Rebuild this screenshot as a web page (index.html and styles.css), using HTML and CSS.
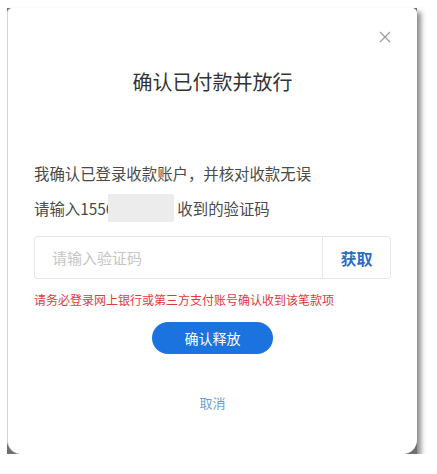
FILE: index.html
```html
<!DOCTYPE html>
<html lang="zh-CN">
<head>
<meta charset="utf-8">
<title>确认已付款并放行</title>
<link rel="stylesheet" href="styles.css">
</head>
<body>
<div class="stage">
  <div class="frame">
    <div class="modal">
      <button class="close" aria-label="关闭">
        <svg width="12" height="12" viewBox="0 0 12 12"><path d="M1 1L11 11M11 1L1 11" stroke="#9a9a9a" stroke-width="1.2" fill="none"/></svg>
      </button>
      <h1 class="title">确认已付款并放行</h1>
      <p class="line1">我确认已登录收款账户，并核对收款无误</p>
      <p class="line2">请输入1556<span class="mask"></span>收到的验证码</p>
      <div class="field">
        <div class="placeholder">请输入验证码</div>
        <div class="fetch">获取</div>
      </div>
      <p class="warn">请务必登录网上银行或第三方支付账号确认收到该笔款项</p>
      <div class="actions">
        <button class="primary">确认释放</button>
        <button class="cancel">取消</button>
      </div>
    </div>
  </div>
</div>
</body>
</html>
```

FILE: styles.css
```css
html, body {
  margin: 0;
  padding: 0;
  background: #ffffff;
}
body {
  font-family: "Noto Sans CJK SC", "Noto Sans", "Liberation Sans", sans-serif;
}
.stage {
  padding: 8px 0 0 7px;
}
.frame {
  width: 410px;
  height: 446px;
  background: #6e6e6e;
  box-shadow: 4px 4px 5px rgba(0, 0, 0, 0.45);
}
.modal {
  position: relative;
  box-sizing: border-box;
  width: 410px;
  height: 446px;
  background: #ffffff;
  border-left: 1px solid #d6d6d6;
  border-radius: 5px 5px 14px 14px;
  padding: 0 26px 0 26px;
  display: flex;
  flex-direction: column;
}
.close {
  position: absolute;
  top: 23px;
  right: 26px;
  width: 12px;
  height: 12px;
  padding: 0;
  border: 0;
  background: none;
  display: flex;
}
.title {
  margin: 60px 0 0;
  font-size: 20px;
  line-height: 28px;
  font-weight: 400;
  color: #333333;
  text-align: center;
}
.line1 {
  margin: 66px 0 0;
  font-size: 15.4px;
  line-height: 22px;
  color: #4a4a4a;
}
.line2 {
  margin: 10px 0 0;
  height: 28px;
  display: flex;
  align-items: center;
  font-size: 15.4px;
  color: #4a4a4a;
  white-space: nowrap;
}
.mask {
  display: block;
  width: 66px;
  height: 28px;
  margin: 0 3px 0 -6px;
  background: #ececec;
}
.field {
  margin-top: 14px;
  height: 43px;
  box-sizing: border-box;
  border: 1px solid #e6e6e6;
  border-radius: 3px;
  display: flex;
  align-items: stretch;
}
.placeholder {
  flex: 1;
  display: flex;
  align-items: center;
  padding-left: 17px;
  font-size: 15px;
  color: #c6c6c6;
}
.fetch {
  width: 67px;
  border-left: 1px solid #e6e6e6;
  display: flex;
  align-items: center;
  justify-content: center;
  font-size: 16px;
  font-weight: 700;
  color: #2b6cc4;
}
.warn {
  margin: 12px 0 0;
  font-size: 12px;
  line-height: 18px;
  color: #e0393e;
  white-space: nowrap;
}
.actions {
  display: flex;
  flex-direction: column;
  align-items: center;
}
.primary {
  margin-top: 13px;
  width: 121px;
  height: 32px;
  border: 0;
  border-radius: 16px;
  background: #1b73df;
  color: #ffffff;
  font-family: inherit;
  font-size: 14px;
  padding: 0;
}
.cancel {
  margin-top: 39px;
  border: 0;
  background: none;
  padding: 0;
  height: 20px;
  font-family: inherit;
  font-size: 13px;
  line-height: 20px;
  color: #6a9fd6;
}
```
